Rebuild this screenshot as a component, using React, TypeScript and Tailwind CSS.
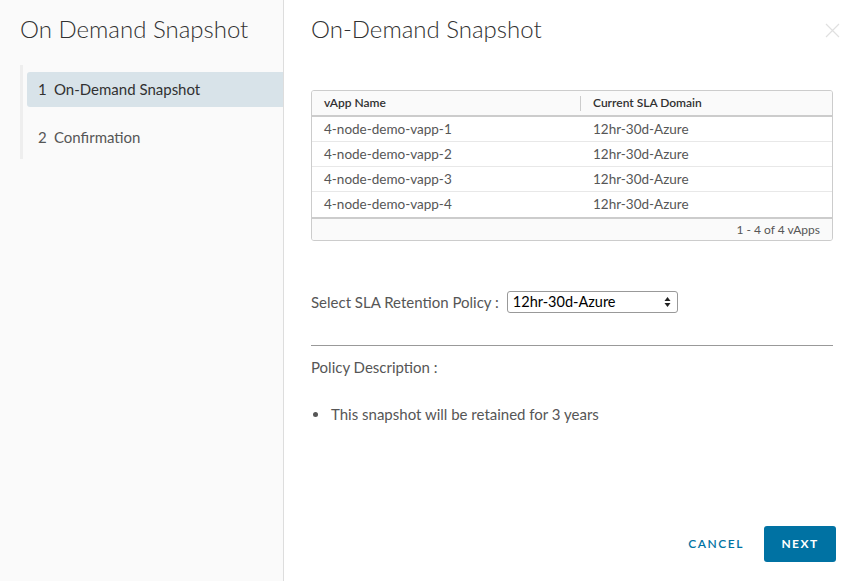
import React from 'react';

const vapps = [
  { name: '4-node-demo-vapp-1', sla: '12hr-30d-Azure' },
  { name: '4-node-demo-vapp-2', sla: '12hr-30d-Azure' },
  { name: '4-node-demo-vapp-3', sla: '12hr-30d-Azure' },
  { name: '4-node-demo-vapp-4', sla: '12hr-30d-Azure' },
];

function Steps() {
  return (
    <div className="ml-5 mt-[22px] border-l-[3px] border-[#eeeeee] pt-[7px] flex flex-col">
      <div className="ml-1 h-[35px] flex items-center pl-[11px] bg-[#d8e3e9] rounded-l-[3px] text-[15px] text-[#313131]">
        <span className="w-4">1</span>On-Demand Snapshot
      </div>
      <div className="ml-1 h-[52px] pt-[9px] flex items-center pl-[11px] text-[15px] text-[#565656]">
        <span className="w-4">2</span>Confirmation
      </div>
    </div>
  );
}

function VappTable() {
  return (
    <div className="mt-[47px] border border-[#cccccc] rounded-[3px] overflow-hidden text-[13.5px] text-[#565656]">
      <div className="flex h-[26px] items-center bg-[#fafafa] border-b-2 border-[#cccccc] text-[12px] font-semibold text-[#313131]">
        <div className="w-[269px] pl-3 border-r border-[#cccccc] h-[15px] flex items-center">vApp Name</div>
        <div className="pl-3">Current SLA Domain</div>
      </div>
      {vapps.map((v, i) => (
        <div
          key={v.name}
          className={`flex h-[25px] items-center ${i < vapps.length - 1 ? 'border-b border-[#e8e8e8]' : ''}`}
        >
          <div className="w-[269px] pl-3">{v.name}</div>
          <div className="pl-3">{v.sla}</div>
        </div>
      ))}
      <div className="border-t-2 border-[#cccccc] bg-[#fafafa] h-[23px] flex items-center justify-end pr-3 text-[12px] text-[#565656]">
        1 - 4 of 4 vApps
      </div>
    </div>
  );
}

export default function App() {
  return (
    <div
      className="w-[856px] h-[581px] flex bg-white overflow-hidden"
      style={{ fontFamily: 'Lato, "Open Sans", sans-serif' }}
    >
      <aside className="w-[284px] shrink-0 bg-[#fafafa] border-r border-[#dddddd] pt-[15px]">
        <h1 className="pl-5 text-[24px] font-light text-[#313131] leading-[28px]">On Demand Snapshot</h1>
        <Steps />
      </aside>

      <main className="flex-1 pl-[27px] pr-[20px] pt-[15px] flex flex-col">
        <div className="flex items-start justify-between">
          <h2 className="text-[24px] font-light text-[#313131] leading-[28px]">On-Demand Snapshot</h2>
          <button className="mt-[8px] mr-[-4px] text-[#e0e0e0]">
            <svg width="15" height="15" viewBox="0 0 15 15" fill="none" stroke="currentColor" strokeWidth="1.2">
              <path d="M1 1L14 14M14 1L1 14" />
            </svg>
          </button>
        </div>

        <div className="mr-[3px]">
          <VappTable />
        </div>

        <div className="mt-[50px] flex items-center text-[15px] text-[#565656]">
          <span>Select SLA Retention Policy :</span>
          <div className="ml-[8px] w-[171px] h-[22px] border border-[#999999] rounded-[3px] bg-white flex items-center justify-between pl-[5px] pr-[6px] text-[14.5px] text-[#000000]">
            <span>12hr-30d-Azure</span>
            <svg width="7" height="12" viewBox="0 0 7 12" fill="#222">
              <path d="M3.5 1L6.5 5H0.5Z" />
              <path d="M3.5 11L6.5 7H0.5Z" />
            </svg>
          </div>
        </div>

        <hr className="mt-[31px] mr-[3px] border-t border-[#999999]" />

        <p className="mt-[10px] text-[15px] text-[#565656]">Policy Description :</p>

        <ul className="mt-[25px] text-[15px] text-[#565656]">
          <li className="flex items-center">
            <span className="w-[5px] h-[5px] rounded-full bg-[#565656] ml-[2px] mr-[13px]" />
            This snapshot will be retained for 3 years
          </li>
        </ul>

        <div className="mt-auto mb-[19px] flex items-center justify-end">
          <button className="h-9 px-[20px] text-[12px] font-semibold tracking-[0.13em] text-[#0072a3]">CANCEL</button>
          <button className="h-9 w-[72px] rounded-[3px] bg-[#0072a3] text-white text-[12px] font-bold tracking-[0.12em]">
            NEXT
          </button>
        </div>
      </main>
    </div>
  );
}
